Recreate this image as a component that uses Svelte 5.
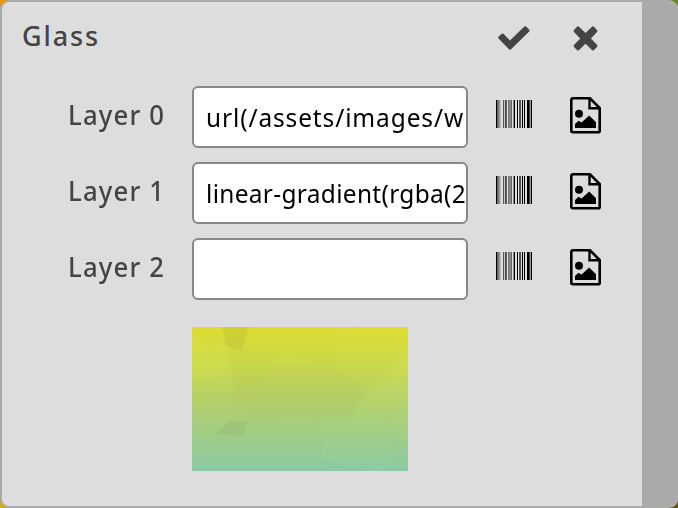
<script>
  const layers = ['url(/assets/images/w', 'linear-gradient(rgba(2', ''];
  // One grey level per pixel column of the barcode.
  const bars = '0679bdd5c46d7886d80dd0d55d0d0dd00490'.split('');
</script>

<div class="page">
  <main class="dialog">
    <section class="content">
      <header class="head">
        <h1>Glass</h1>
        <button class="tick" aria-label="Apply">
          <svg width="32" height="25" viewBox="0 0 32 25"><path d="M.700 10.500Q-.300 11.500 .700 12.700L11 23.300Q12 24.300 13 23.300L31 5.800Q32 4.700 31 3.600L28.300 .800Q27.200 -.200 26.100 .800L12 14.500 5.700 8Q4.600 7 3.500 8Z" fill="#444" /></svg>
        </button>
        <button class="cross" aria-label="Close">
          <svg width="25" height="25" viewBox="0 0 25 25"><path d="M4 .7Q5 0 6 .7L12.500 7 19 .7Q20 0 21 .7L24 3.900Q25 5 24 6L17.900 12.400 24 18.800Q25 20 24 21L21 24Q20 25 19 24L12.500 17.800 6 24Q5 25 4 24L1 21Q0 20 1 19L7.200 12.400 1 6Q0 5 1 4Z" fill="#444" /></svg>
        </button>
      </header>
      {#each layers as value, i}
        <div class="row">
          <span class="label"><span>Layer {i}</span></span>
          <div class="field"><span class:gradient={i === 1}>{value}</span></div>
          <svg class="barcode" width="36" height="28" viewBox="0 0 36 28" shape-rendering="crispEdges">
            {#each bars as level, x}
              <rect {x} y="0" width="1" height="28" fill={'#' + level.repeat(3)} />
            {/each}
          </svg>
          <svg class="file" width="31" height="37" viewBox="0 0 31 37">
            <path d="M3 1.300H20L29.700 11V33.700Q29.700 35.300 28 35.300H3Q1.300 35.300 1.300 33.700V3Q1.300 1.300 3 1.300Z" fill="none" stroke="#000" stroke-width="2.600" />
            <path d="M19.500 1.300V11.300H29.700" fill="none" stroke="#000" stroke-width="2.400" />
            <circle cx="9" cy="16.800" r="4" />
            <path d="M5 31V27L8.500 23.700 11.500 25.500 19.200 18.500 26 25.200V31Z" />
          </svg>
        </div>
      {/each}
      <div class="preview">
        <svg width="216" height="144" viewBox="0 0 216 144">
          <defs>
            <linearGradient id="wash" x1="0" y1="0" x2="0" y2="1">
              <stop offset="0" stop-color="#dddd31" />
              <stop offset=".25" stop-color="#cdd94b" />
              <stop offset=".5" stop-color="#b5d067" />
              <stop offset=".75" stop-color="#a0cc86" />
              <stop offset="1" stop-color="#8bc9a5" />
            </linearGradient>
            <linearGradient id="shade" x1="0" y1="0" x2="0" y2="1">
              <stop offset="0" stop-color="#777f20" stop-opacity="0" />
              <stop offset=".6" stop-color="#777f30" stop-opacity=".06" />
              <stop offset="1" stop-color="#777f50" stop-opacity="0" />
            </linearGradient>
            <filter id="soften"><feGaussianBlur stdDeviation="1.500" /></filter>
          </defs>
          <rect width="216" height="144" fill="url(#wash)" />
          <g filter="url(#soften)">
            <path d="M34 20 50 24 60 0H216V20L174 66 130 36 90 24 77 38 70 63 45 95 40 48Z" fill="url(#shade)" />
            <path d="M0 10 33 18 40 47 0 55Z" fill="#def050" opacity=".1" />
            <path d="M130 36 174 66 155 90 90 89 45 95 70 65 77 38Z" fill="#8b9a45" opacity=".05" />
            <path d="M145 0 216 8V52L174 66 145 40Z" fill="#e4f060" opacity=".08" />
            <path d="M174 66 216 52V120L196 88 160 90Z" fill="#c6eb80" opacity=".1" />
            <path d="M129 94 196 88 208 115 194 140 130 134Z" fill="#bfe7a0" opacity=".06" />
          </g>
          <path d="M30 0H57L50 24 34 19Z" fill="#8b9230" opacity=".17" />
          <path d="M24 107 38 93 45 96 56 94 50 109Z" fill="#718d55" opacity=".13" />
        </svg>
      </div>
    </section>
    <aside class="track"></aside>
  </main>
</div>

<style>
  :global(body) { margin: 0; }
  .page {
    width: 678px;
    height: 508px;
    overflow: hidden;
    background: conic-gradient(from 0deg at 50% 50%, #688b18 0 90deg, #655800 90deg 180deg, #d5aa10 180deg 270deg, #ec9500 270deg);
    font-family: 'Noto Sans', sans-serif;
  }
  .dialog {
    box-sizing: border-box;
    display: flex;
    width: 678px;
    height: 508px;
    border: 2px solid #aaa;
    border-right-width: 0;
    border-radius: 9px;
    background: #ddd;
    overflow: hidden;
  }
  .content { width: 640px; }
  .track { width: 36px; background: #aaa; }
  .head { display: flex; align-items: flex-start; height: 84px; }
  h1 {
    width: 475px;
    margin: 15px 0 0 20px;
    color: #444;
    font-size: 27px;
    font-weight: 500;
    line-height: 38px;
    letter-spacing: 1.9px;
  }
  button { padding: 0; border: 0; background: none; }
  button svg { display: block; }
  .tick { margin: 24px 0 0 1px; }
  .cross { margin: 24px 0 0 43px; }
  .row { display: flex; height: 62px; margin-bottom: 14px; }
  .label {
    width: 163px;
    margin-right: 27px;
    color: #444;
    font-size: 26.500px;
    font-weight: 500;
    line-height: 59px;
    letter-spacing: 1.200px;
    text-align: right;
    white-space: nowrap;
  }
  .label span {
    display: inline-block;
    transform: scaleX(.97);
    transform-origin: right;
  }
  .field {
    box-sizing: border-box;
    width: 276px;
    height: 62px;
    padding-left: 12px;
    border: 2px solid #888;
    border-radius: 6px;
    background: #fff;
    color: #000;
    font-size: 26px;
    line-height: 59px;
    letter-spacing: .1px;
    white-space: nowrap;
    overflow: hidden;
  }
  .field span {
    display: inline-block;
    transform: scaleX(.94);
    transform-origin: left;
    letter-spacing: .950px;
  }
  .field .gradient { letter-spacing: .350px; }
  .barcode { margin: 14px 0 0 28px; }
  .file { margin: 11px 0 0 38px; }
  .preview { margin: 27px 0 0 190px; height: 144px; }
  .preview svg { display: block; }
</style>
